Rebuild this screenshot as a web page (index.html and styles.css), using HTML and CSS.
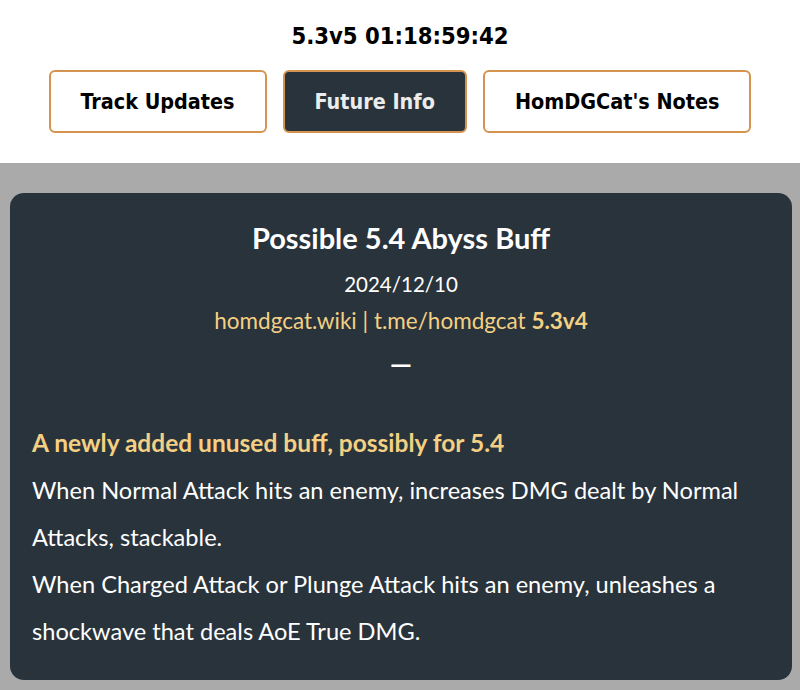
FILE: index.html
```html
<!DOCTYPE html>
<html>
<head>
<meta charset="utf-8">
<link rel="stylesheet" href="styles.css">
</head>
<body>
<header class="top">
  <div class="clock">5.3v5 01:18:59:42</div>
  <nav class="tabs">
    <button class="tab">Track Updates</button>
    <button class="tab active">Future Info</button>
    <button class="tab">HomDGCat's Notes</button>
  </nav>
</header>
<main class="page">
  <section class="card">
    <h1 class="title">Possible 5.4 Abyss Buff</h1>
    <div class="date">2024/12/10</div>
    <div class="links">homdgcat.wiki | t.me/homdgcat <b>5.3v4</b></div>
    <div class="dash">—</div>
    <div class="body">
      <div class="lead">A newly added unused buff, possibly for 5.4</div>
      <p class="text">When Normal Attack hits an enemy, increases DMG dealt by Normal Attacks, stackable.</p>
      <p class="text">When Charged Attack or Plunge Attack hits an enemy, unleashes a shockwave that deals AoE True DMG.</p>
    </div>
  </section>
</main>
</body>
</html>
```
FILE: styles.css
```css
html, body {
  margin: 0;
  padding: 0;
}
body {
  background: #aaaaaa;
  font-family: Lato, "Liberation Sans", sans-serif;
  width: 800px;
  height: 690px;
  overflow: hidden;
}
.top {
  background: #ffffff;
  height: 163px;
  display: flex;
  flex-direction: column;
  align-items: center;
  box-sizing: border-box;
  padding-top: 20px;
}
.clock {
  font-family: "DejaVu Sans Condensed", "DejaVu Sans", sans-serif;
  font-weight: bold;
  font-size: 23.6px;
  line-height: 32px;
  color: #000;
}
.tabs {
  display: flex;
  gap: 16px;
  margin-top: 18px;
}
.tab {
  font-family: "DejaVu Sans Condensed", "DejaVu Sans", sans-serif;
  font-weight: bold;
  font-size: 21.4px;
  height: 63px;
  padding: 0 30px;
  background: #ffffff;
  color: #000;
  border: 2px solid #d4944f;
  border-radius: 6px;
}
.tab.active {
  background: #29333b;
  color: #ececec;
}
.page {
  padding: 30px 8px 0 10px;
}
.card {
  background: #29333b;
  border-radius: 14px;
  color: #ffffff;
  text-align: center;
  padding: 21px 0 20px;
  height: 487px;
  box-sizing: border-box;
}
.title {
  margin: 0;
  font-size: 29px;
  font-weight: bold;
  line-height: 48px;
}
.date {
  font-size: 20.5px;
  line-height: 38px;
  margin-top: 3px;
}
.links {
  font-size: 22.5px;
  line-height: 36px;
  color: #f3d083;
}
.dash {
  font-weight: bold;
  font-size: 28px;
  line-height: 48px;
}
.body {
  text-align: left;
  padding: 0 22px;
  margin-top: 32px;
}
.lead {
  color: #f3d083;
  font-weight: bold;
  font-size: 24.5px;
  line-height: 48px;
}
.text {
  margin: 0;
  font-size: 23.6px;
  line-height: 47px;
}
```
